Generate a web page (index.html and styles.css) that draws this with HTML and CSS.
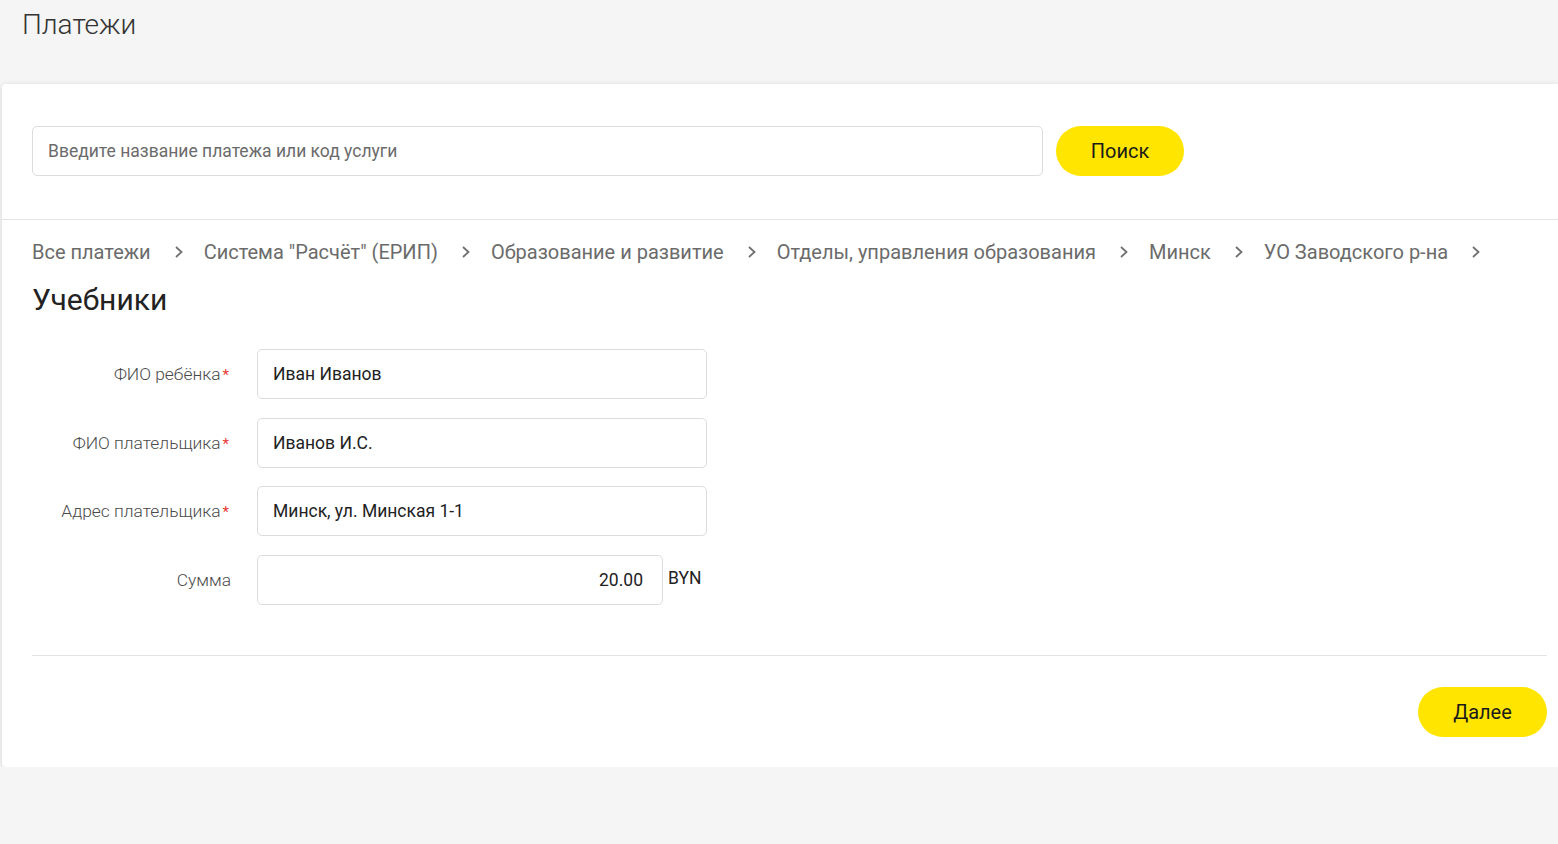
FILE: index.html
```html
<!DOCTYPE html>
<html lang="ru">
<head>
<meta charset="utf-8">
<title>Платежи</title>
<link rel="stylesheet" href="styles.css">
</head>
<body>
<h1 class="page-title">Платежи</h1>
<div class="card">
  <div class="search">
    <div class="search-input">Введите название платежа или код услуги</div>
    <button class="btn">Поиск</button>
  </div>
  <div class="content">
    <nav class="crumbs">
      <span class="crumb">Все платежи</span>
      <svg class="chev" viewBox="0 0 8 12" width="8" height="12"><path d="M1 1 L6.5 6 L1 11" fill="none" stroke="#707070" stroke-width="1.8"/></svg>
      <span class="crumb">Система "Расчёт" (ЕРИП)</span>
      <svg class="chev" viewBox="0 0 8 12" width="8" height="12"><path d="M1 1 L6.5 6 L1 11" fill="none" stroke="#707070" stroke-width="1.8"/></svg>
      <span class="crumb">Образование и развитие</span>
      <svg class="chev" viewBox="0 0 8 12" width="8" height="12"><path d="M1 1 L6.5 6 L1 11" fill="none" stroke="#707070" stroke-width="1.8"/></svg>
      <span class="crumb">Отделы, управления образования</span>
      <svg class="chev" viewBox="0 0 8 12" width="8" height="12"><path d="M1 1 L6.5 6 L1 11" fill="none" stroke="#707070" stroke-width="1.8"/></svg>
      <span class="crumb">Минск</span>
      <svg class="chev" viewBox="0 0 8 12" width="8" height="12"><path d="M1 1 L6.5 6 L1 11" fill="none" stroke="#707070" stroke-width="1.8"/></svg>
      <span class="crumb">УО Заводского р-на</span>
      <svg class="chev" viewBox="0 0 8 12" width="8" height="12"><path d="M1 1 L6.5 6 L1 11" fill="none" stroke="#707070" stroke-width="1.8"/></svg>
    </nav>
    <h2 class="service">Учебники</h2>
    <div class="form">
      <div class="row">
        <div class="label">ФИО ребёнка<span class="req">*</span></div>
        <div class="field">Иван Иванов</div>
      </div>
      <div class="row">
        <div class="label">ФИО плательщика<span class="req">*</span></div>
        <div class="field">Иванов И.С.</div>
      </div>
      <div class="row">
        <div class="label">Адрес плательщика<span class="req">*</span></div>
        <div class="field">Минск, ул. Минская 1-1</div>
      </div>
      <div class="row">
        <div class="label">Сумма</div>
        <div class="field field-sum">20.00</div>
        <div class="currency">BYN</div>
      </div>
    </div>
    <div class="footer">
      <button class="btn btn-next">Далее</button>
    </div>
  </div>
</div>
</body>
</html>
```

FILE: styles.css
```css
* { box-sizing: border-box; }
html, body { margin: 0; padding: 0; }
body {
  background: #f5f5f5;
  font-family: Roboto, "Noto Sans", sans-serif;
  color: #222;
  overflow: hidden;
}
.page-title {
  margin: 0;
  padding: 6px 0 0 22px;
  height: 84px;
  font-size: 28px;
  font-weight: 300;
  line-height: 38px;
  color: #333;
}
.card {
  margin-left: 2px;
  background: #fff;
  border-radius: 4px 0 0 4px;
  box-shadow: 0 1px 6px rgba(0,0,0,0.13);
}
.search {
  display: flex;
  align-items: center;
  gap: 13px;
  padding: 42px 30px 43px 30px;
  border-bottom: 1px solid #e2e2e2;
}
.search-input {
  width: 1011px;
  height: 50px;
  border: 1px solid #dcdcdc;
  border-radius: 5px;
  padding: 0 15px;
  display: flex;
  align-items: center;
  font-size: 17.5px;
  color: #6b6b6b;
}
.btn {
  height: 50px;
  width: 128px;
  border: none;
  border-radius: 25px;
  background: #ffe500;
  font-family: Roboto, "Noto Sans", sans-serif;
  font-size: 20px;
  color: #1a1a1a;
  padding: 0;
}
.content {
  padding: 19px 11px 30px 30px;
}
.crumbs {
  display: flex;
  align-items: center;
  height: 26px;
  font-size: 20px;
  color: #6b6b6b;
}
.chev {
  flex: none;
  margin: 0 21px 0 24px;
}
.service {
  margin: 17px 0 0 0;
  font-size: 30px;
  font-weight: 400;
  line-height: 36px;
  color: #222;
}
.form {
  margin-top: 31px;
  display: flex;
  flex-direction: column;
  gap: 18.7px;
}
.row {
  display: flex;
  align-items: center;
}
.label {
  width: 199px;
  text-align: right;
  font-size: 17.4px;
  font-weight: 300;
  color: #4a4a4a;
  margin-right: 26px;
}
.req {
  color: #e53935;
  margin-left: 2px;
  margin-right: 2px;
  font-size: 15px;
  font-weight: 400;
}
.field {
  width: 450px;
  height: 50px;
  border: 1px solid #dcdcdc;
  border-radius: 5px;
  padding: 0 15px;
  display: flex;
  align-items: center;
  font-size: 17.5px;
  color: #222;
}
.field-sum {
  width: 406px;
  justify-content: flex-end;
  padding-right: 19px;
}
.currency {
  margin-left: 5px;
  font-size: 17.5px;
  color: #222;
  align-self: flex-start;
  margin-top: 13px;
}
.footer {
  margin-top: 50px;
  border-top: 1px solid #e2e2e2;
  padding-top: 31px;
  display: flex;
  justify-content: flex-end;
}
.btn-next { width: 129px; }
```
